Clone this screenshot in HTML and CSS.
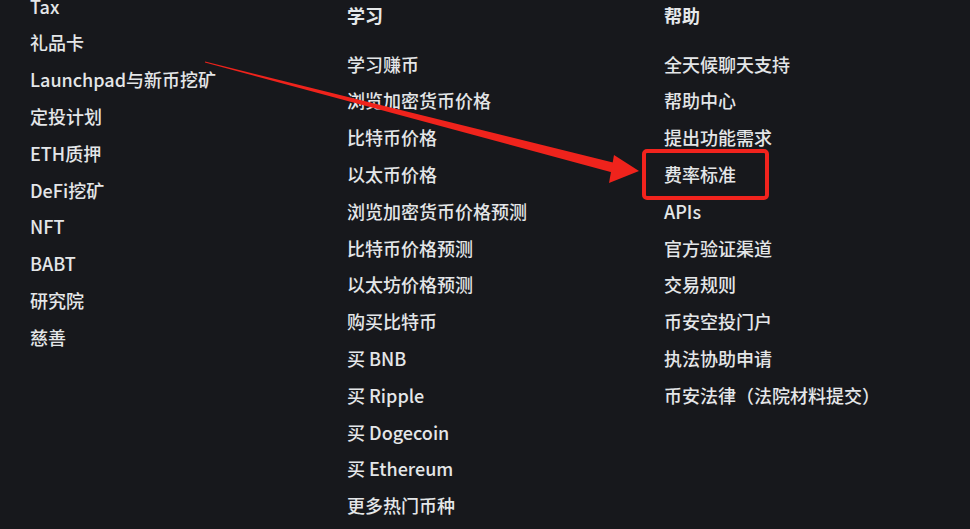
FILE: index.html
```html
<!DOCTYPE html>
<html lang="zh-CN">
<head>
<meta charset="utf-8">
<title>Footer links</title>
<link rel="stylesheet" href="styles.css">
</head>
<body>
<div class="page">
  <div class="footer">
    <ul class="col col-first">
      <li>Tax</li>
      <li>礼品卡</li>
      <li>Launchpad与新币挖矿</li>
      <li>定投计划</li>
      <li>ETH质押</li>
      <li>DeFi挖矿</li>
      <li>NFT</li>
      <li>BABT</li>
      <li>研究院</li>
      <li>慈善</li>
    </ul>
    <div class="col">
      <h3 class="heading">学习</h3>
      <ul class="list">
        <li>学习赚币</li>
        <li>浏览加密货币价格</li>
        <li>比特币价格</li>
        <li>以太币价格</li>
        <li>浏览加密货币价格预测</li>
        <li>比特币价格预测</li>
        <li>以太坊价格预测</li>
        <li>购买比特币</li>
        <li>买 BNB</li>
        <li>买 Ripple</li>
        <li>买 Dogecoin</li>
        <li>买 Ethereum</li>
        <li>更多热门币种</li>
      </ul>
    </div>
    <div class="col">
      <h3 class="heading">帮助</h3>
      <ul class="list">
        <li>全天候聊天支持</li>
        <li>帮助中心</li>
        <li>提出功能需求</li>
        <li><span class="marked">费率标准</span></li>
        <li>APIs</li>
        <li>官方验证渠道</li>
        <li>交易规则</li>
        <li>币安空投门户</li>
        <li>执法协助申请</li>
        <li>币安法律（法院材料提交）</li>
      </ul>
    </div>
  </div>
  <svg class="annot" width="970" height="529" viewBox="0 0 970 529" aria-hidden="true">
    <polygon class="arrow" points="205,61.5 621,164.5 618,174 205,62.5"/>
    <polygon class="arrow" points="639,171 614,155 609,183"/>
  </svg>
</div>
</body>
</html>
```

FILE: styles.css
```css
html, body {
  margin: 0;
  padding: 0;
  background: #17181c;
}

.page {
  position: relative;
  width: 970px;
  height: 529px;
  overflow: hidden;
  background: #17181c;
  font-family: "Noto Sans CJK SC", "Noto Sans", sans-serif;
  color: #e4e6e8;
}

.footer {
  display: grid;
  grid-template-columns: 317px 317px 1fr;
  padding-left: 30px;
}

.col {
  margin: 0;
  padding: 0;
  list-style: none;
}

.col-first {
  margin-top: -12.4px;
}

.heading {
  margin: 0 0 15.6px 0;
  font-size: 18px;
  line-height: 30px;
  font-weight: 700;
  color: #e6e8ea;
}

.list {
  margin: 0;
  padding: 0;
  list-style: none;
}

.col li {
  font-size: 18px;
  line-height: 36.8px;
  font-weight: 500;
  white-space: nowrap;
}

.marked {
  position: relative;
}

.marked::after {
  content: "";
  position: absolute;
  left: -22px;
  top: -12px;
  width: 119px;
  height: 43px;
  border: 4px solid #f2231d;
  border-radius: 5px;
}

.annot {
  position: absolute;
  left: 0;
  top: 0;
  pointer-events: none;
}

.arrow {
  fill: #ef231c;
}
```
